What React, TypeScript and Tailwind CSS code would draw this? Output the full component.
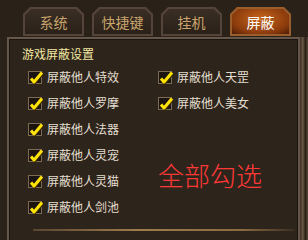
const FONT = "font-['Noto_Sans_CJK_SC','Noto_Sans',sans-serif]";

const TABS = ["系统", "快捷键", "挂机", "屏蔽"];
const LEFT_ITEMS = ["屏蔽他人特效", "屏蔽他人罗摩", "屏蔽他人法器", "屏蔽他人灵宠", "屏蔽他人灵猫", "屏蔽他人剑池"];
const RIGHT_ITEMS = ["屏蔽他人天罡", "屏蔽他人美女"];

function Tab({ label, active }: { label: string; active?: boolean }) {
  return (
    <div
      className={`w-[61px] h-[29px] p-[2px] [clip-path:polygon(7px_0,calc(100%-7px)_0,100%_7px,100%_100%,0_100%,0_7px)] ${
        active ? "bg-[#9a5e2c]" : "bg-[#54443a]"
      }`}
    >
      <div
        className={`w-full h-full flex items-center justify-center text-[14px] leading-none [clip-path:polygon(6px_0,calc(100%-6px)_0,100%_6px,100%_100%,0_100%,0_6px)] ${
          active
            ? "bg-[radial-gradient(ellipse_at_50%_40%,#c8661c,#8a3a0c_70%,#4a1c06)] text-white"
            : "bg-[linear-gradient(#3a2e24,#2a2119)] text-[#c9a46c]"
        }`}
      >
        {label}
      </div>
    </div>
  );
}

function CheckBox() {
  return (
    <svg width="16" height="15" viewBox="0 0 16 15" className="shrink-0">
      <rect x="0.5" y="1.5" width="13" height="12" fill="#1c150f" stroke="#7c6a52" />
      <polyline points="3,8.5 6,12 14,2.5" fill="none" stroke="#3a2a00" strokeWidth="3.4" transform="translate(0.6,0.8)" />
      <polyline points="3,8.5 6,12 14,2.5" fill="none" stroke="#ffe400" strokeWidth="3" strokeLinejoin="round" />
    </svg>
  );
}

function Item({ label }: { label: string }) {
  return (
    <div className="h-[26px] flex items-center gap-[3px]">
      <CheckBox />
      <span className="text-[12px] leading-none text-[#e4ded0]">{label}</span>
    </div>
  );
}

export default function App() {
  return (
    <div className={`w-[308px] h-[240px] overflow-hidden bg-[#2a2119] relative ${FONT}`}>
      <div className="flex gap-[8px] pl-[23px] pt-[7px] h-[37px]">
        {TABS.map((t) => (
          <Tab key={t} label={t} active={t === "屏蔽"} />
        ))}
      </div>
      <div className="ml-[7px] w-[293px] h-[210px] border-2 border-[#66574a] bg-[#2d251b] shadow-[inset_0_0_0_1px_#1a140e]">
        <div className="pl-[13px] pt-[8px] text-[12px] leading-[14px] text-[#f3e7a2]">游戏屏蔽设置</div>
        <div className="flex pt-[3px]">
          <div className="flex flex-col pl-[19px] w-[149px]">
            {LEFT_ITEMS.map((t) => (
              <Item key={t} label={t} />
            ))}
          </div>
          <div className="flex flex-col">
            {RIGHT_ITEMS.map((t) => (
              <Item key={t} label={t} />
            ))}
            <div className="mt-[44px] text-[26px] leading-[30px] font-light text-[#ff3838]">全部勾选</div>
          </div>
        </div>
        <div className="mt-[9px] ml-[24px] w-[262px] h-[2px] bg-[linear-gradient(90deg,#5a4630,#a07c4c_40%,#8a6a40_80%,#3a2e22)]" />
      </div>
      <div className="absolute top-[37px] right-0 w-[8px] h-[203px] bg-[linear-gradient(90deg,#3a2e22,#6a5846,#2a2119,#5a4a38)]" />
    </div>
  );
}
